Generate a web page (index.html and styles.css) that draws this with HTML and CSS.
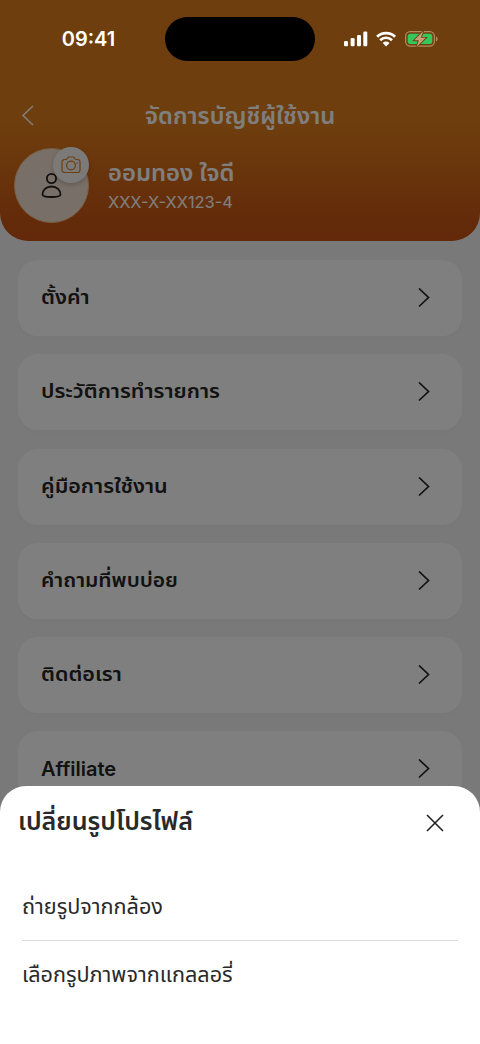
FILE: index.html
```html
<!DOCTYPE html>
<html lang="th">
<head>
<meta charset="utf-8">
<meta name="viewport" content="width=device-width">
<title>จัดการบัญชีผู้ใช้งาน</title>
<link rel="stylesheet" href="styles.css">
</head>
<body>
<main class="phone">
  <header class="header">
    <div class="nav">
      <svg class="back" width="14" height="22" viewBox="0 0 14 22"><path d="M12 1 2 10.500l10 9.500"/></svg>
      <h1 class="title"><span class="t-title">จัดการบัญชีผู้ใช้งาน</span></h1>
    </div>
    <div class="profile">
      <div class="avatar">
        <svg class="person" width="22" height="28" viewBox="0 0 22 28"><circle cx="10.500" cy="6.500" r="4.600"/><path d="M1.500 22.500c0-4.300 3.600-8 9-8s9 3.700 9 8c0 1.500-2.500 2.500-9 2.500s-9-1-9-2.500Z"/></svg>
        <div class="camera">
          <svg width="20" height="18" viewBox="0 0 20 18"><path d="M3.500 3.500h1.300c.6 0 1-.3 1.300-.8l.4-.7c.3-.7.800-1 1.500-1h4c.7 0 1.200.3 1.500 1l.4.7c.3.500.7.800 1.300.8h1.300A2.500 2.500 0 0 1 19 6v8a2.500 2.500 0 0 1-2.500 2.500h-13A2.500 2.500 0 0 1 1 14V6a2.500 2.500 0 0 1 2.500-2.500Z"/><circle cx="10" cy="9.500" r="4.400"/><circle class="dot" cx="16" cy="7.300" r=".7"/></svg>
        </div>
      </div>
      <div class="identity">
        <div class="name"><span class="t-name">ออมทอง ใจดี</span></div>
        <div class="number">XXX-X-XX123-4</div>
      </div>
    </div>
  </header>
  <nav class="menu">
    <a class="card"><span class="t-1">ตั้งค่า</span><svg class="chev" width="12" height="20" viewBox="0 0 12 20"><path d="m1 .5 9.500 9L1 18.500"/></svg></a>
    <a class="card"><span class="t-2">ประวัติการทำรายการ</span><svg class="chev" width="12" height="20" viewBox="0 0 12 20"><path d="m1 .5 9.500 9L1 18.500"/></svg></a>
    <a class="card"><span class="t-3">คู่มือการใช้งาน</span><svg class="chev" width="12" height="20" viewBox="0 0 12 20"><path d="m1 .5 9.500 9L1 18.500"/></svg></a>
    <a class="card"><span class="t-4">คำถามที่พบบ่อย</span><svg class="chev" width="12" height="20" viewBox="0 0 12 20"><path d="m1 .5 9.500 9L1 18.500"/></svg></a>
    <a class="card"><span class="t-5">ติดต่อเรา</span><svg class="chev" width="12" height="20" viewBox="0 0 12 20"><path d="m1 .5 9.500 9L1 18.500"/></svg></a>
    <a class="card"><span class="t-6">Affiliate</span><svg class="chev" width="12" height="20" viewBox="0 0 12 20"><path d="m1 .5 9.500 9L1 18.500"/></svg></a>
  </nav>
  <div class="overlay">
    <div class="status">
      <time class="clock">09:41</time>
      <div class="island"></div>
      <svg class="indicators" width="96" height="18" viewBox="0 0 96 18">
        <g fill="#fff"><rect x="1" y="11" width="4" height="5.300" rx="1.200"/><rect x="7.600" y="8" width="4" height="8.300" rx="1.200"/><rect x="14" y="5" width="4" height="11.300" rx="1.200"/><rect x="20.300" y="1.500" width="4" height="14.800" rx="1.200"/></g>
        <g fill="none" stroke="#fff" stroke-width="2.700"><path d="M34.100 6.800a12.800 12.800 0 0 1 18 0"/><path d="M37.200 10.200a8.300 8.300 0 0 1 11.800 0"/></g>
        <path fill="#fff" d="M39.700 13a4.800 4.800 0 0 1 6.800 0l-3.400 3.500Z"/>
        <rect x="62.600" y="1.700" width="28.800" height="14.500" rx="4.600" fill="none" stroke="#b28a5e" stroke-width="1.200"/>
        <rect x="64.700" y="3.800" width="24.600" height="10.300" rx="2.800" fill="#34c759"/>
        <path d="M93 6.500c2.200.700 2.200 4.200 0 5Z" fill="#b28a5e"/>
        <path d="M80.300 1 71.200 10.300h4.700l-2.500 6.900 9.300-9.400h-4.900Z" fill="#c5a078" stroke="#703f0f" stroke-width="1.800" paint-order="stroke"/>
      </svg>
    </div>
  </div>
  <section class="sheet">
    <div class="sheet-head">
      <h2 class="sheet-title"><span class="t-sheet">เปลี่ยนรูปโปรไฟล์</span></h2>
      <svg width="18" height="18" viewBox="0 0 18 18"><path d="m1 1 16 16M17 1 1 17"/></svg>
    </div>
    <div class="option"><span class="t-a">ถ่ายรูปจากกล้อง</span></div>
    <div class="option"><span class="t-b">เลือกรูปภาพจากแกลลอรี่</span></div>
  </section>
</main>
</body>
</html>
```
FILE: styles.css
```css
* { box-sizing: border-box; }
body { margin: 0; font-family: Inter, "Noto Sans Thai", "Noto Sans", sans-serif; }
.phone { position: relative; width: 480px; height: 1044px; overflow: hidden; background: #f3f3f4; }
h1, h2 { margin: 0; }
span { display: inline-block; white-space: nowrap; transform-origin: left center; }
svg { flex: none; fill: none; }
.header { height: 241px; padding-top: 98px; border-radius: 0 0 28px 28px; background: linear-gradient(#dc7c1c 0, #dc7c1c 125px, #c85614 220px, #c65214); color: #fff; }
.nav { display: grid; grid-template-columns: 56px 1fr 56px; height: 36px; align-items: center; }
.back { margin-left: 21px; stroke: #fff; stroke-width: 1.5; }
.title { text-align: center; font-size: 22.500px; line-height: 34px; font-weight: 600; }
.t-title { transform: scaleX(1.055); transform-origin: center; }
.profile { display: flex; gap: 19px; padding: 14px 14px 0; }
.avatar { position: relative; display: grid; place-items: center; width: 75px; height: 75px; border-radius: 50%; background: #f1dfd0; border: 1px solid #f0bf86; }
.person { stroke: #221f1f; stroke-width: 1.8; }
.camera { position: absolute; top: -2px; right: -1px; display: grid; place-items: center; width: 36px; height: 36px; border-radius: 50%; background: #f6f4f3; box-shadow: 0 2px 5px #0003; }
.camera svg { stroke: #dc7c1c; stroke-width: 1.2; }
.camera .dot { fill: #dc7c1c; stroke: none; }
.name { margin-top: 8px; height: 35px; line-height: 35px; font-size: 23px; font-weight: 600; }
.t-name { transform: scaleX(1.035); }
.number { line-height: 22px; font-size: 16.400px; }
.menu { display: grid; gap: 18.300px; padding: 19px 18px 0; }
.card { display: flex; justify-content: space-between; align-items: center; height: 76px; padding: 0 32px 0 23px; border-radius: 20px; background: #fff; box-shadow: 0 3px 10px #00000005; color: #252525; font-size: 20px; font-weight: 600; }
.card span { transform: scaleX(1.075); }
.card .t-4 { transform: scaleX(1.05); }
.card .t-6 { transform: none; }
.chev { stroke: #222; stroke-width: 1.7; }
.overlay { position: absolute; inset: 0; background: #00000080; }
.status { display: grid; grid-template-columns: 165px 150px 1fr; align-items: center; padding-top: 17px; height: 61px; color: #fff; }
.clock { padding-left: 12px; text-align: center; font-size: 20px; font-weight: 600; }
.island { height: 44px; border-radius: 22px; background: #000; }
.indicators { margin-left: 28px; }
.sheet { position: absolute; left: 0; right: 0; bottom: 0; height: 258px; border-radius: 26px 26px 0 0; background: #fff; color: #292929; }
.sheet-head { display: flex; justify-content: space-between; align-items: center; height: 73px; padding: 0 36px 0 18px; margin-bottom: 13px; }
.sheet-head svg { stroke: #222; stroke-width: 1.6; }
.sheet-title { font-size: 24.500px; font-weight: 600; }
.t-sheet { transform: scaleX(1.025); }
.option { display: flex; align-items: center; height: 68px; margin: 0 22px; padding-top: 2px; font-size: 21px; }
.option span { transform: scaleX(1.03); }
.option + .option { border-top: 1px solid #dcdcdc; }
```
